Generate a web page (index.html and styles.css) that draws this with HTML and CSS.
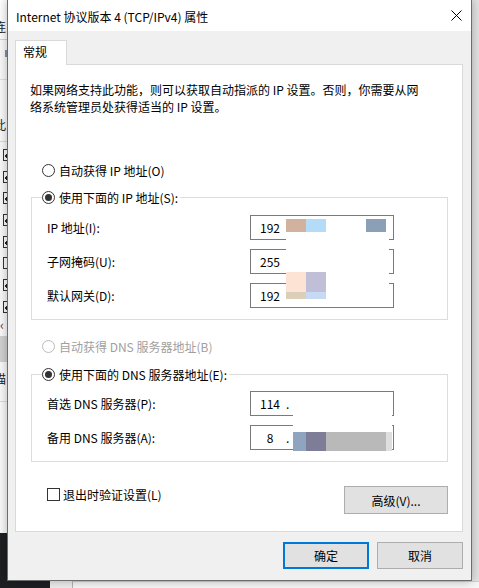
FILE: index.html
```html
<!DOCTYPE html>
<html lang="zh-CN">
<head>
<meta charset="utf-8">
<title>Internet 协议版本 4 (TCP/IPv4) 属性</title>
<link rel="stylesheet" href="styles.css">
</head>
<body>
<div class="desktop">

  <!-- edge of the network connection window behind the dialog -->
  <div class="peek">
    <div class="pk-head"><span class="pk-glyph">连</span></div>
    <div class="pk-bar"><span class="pk-tick"></span></div>
    <div class="pk-label"><span class="pk-glyph">此</span></div>
    <ul class="pk-list">
      <li><span class="pk-box on"></span></li>
      <li><span class="pk-box on"></span></li>
      <li><span class="pk-box on"></span></li>
      <li><span class="pk-box on"></span></li>
      <li><span class="pk-box on"></span></li>
      <li><span class="pk-box"></span></li>
      <li><span class="pk-box on"></span></li>
      <li><span class="pk-box on"></span></li>
    </ul>
    <div class="pk-arrow">‹</div>
    <div class="pk-band"></div>
    <div class="pk-desc"><span class="pk-glyph">描</span></div>
  </div>
  <div class="dark-win"></div>
  <div class="under-win"><div class="under-field"></div></div>

  <!-- IPv4 properties dialog -->
  <div class="dialog">
    <div class="titlebar">
      <span class="title">Internet 协议版本 4 (TCP/IPv4) 属性</span>
      <svg class="close" width="11" height="11" viewBox="0 0 11 11" aria-label="关闭">
        <path d="M0.5 0.5L10.5 10.5M10.5 0.5L0.5 10.5" stroke="#000" stroke-width="1" fill="none"/>
      </svg>
    </div>

    <div class="body">
      <div class="tab">常规</div>
      <div class="panel">
        <p class="desc">如果网络支持此功能，则可以获取自动指派的 IP 设置。否则，你需要从网<br>络系统管理员处获得适当的 IP 设置。</p>

        <label class="opt opt-first"><span class="radio"></span>自动获得 IP 地址(O)</label>

        <div class="group">
          <label class="opt legend"><span class="radio on"></span>使用下面的 IP 地址(S):</label>
          <div class="fields">
            <span>IP 地址(I):</span>
            <div class="ip"><span class="oct">192</span></div>
            <span>子网掩码(U):</span>
            <div class="ip"><span class="oct">255</span></div>
            <span>默认网关(D):</span>
            <div class="ip"><span class="oct">192</span></div>
          </div>
        </div>

        <label class="opt opt-dis"><span class="radio dis"></span>自动获得 DNS 服务器地址(B)</label>

        <div class="group group-dns">
          <label class="opt legend"><span class="radio on"></span>使用下面的 DNS 服务器地址(E):</label>
          <div class="fields fields-dns">
            <span>首选 DNS 服务器(P):</span>
            <div class="ip"><span class="oct">114</span><span class="dot">.</span></div>
            <span>备用 DNS 服务器(A):</span>
            <div class="ip"><span class="oct">8</span><span class="dot">.</span></div>
          </div>
        </div>

        <div class="foot">
          <label class="check"><span class="box"></span>退出时验证设置(L)</label>
          <button class="btn btn-adv">高级(V)...</button>
        </div>
      </div>

      <div class="actions">
        <button class="btn btn-ok">确定</button>
        <button class="btn">取消</button>
      </div>
    </div>

    <!-- pixelated cover over the hidden address octets -->
    <div class="mosaic mosaic-ip">
      <span class="c c-tan"></span>
      <span class="c c-sky"></span>
      <span class="c c-slate"></span>
      <span class="c c-peach"></span>
      <span class="c c-lilac"></span>
      <span class="c c-sand"></span>
      <span class="c c-ice"></span>
    </div>
    <div class="mosaic mosaic-dns">
      <span class="c d-steel"></span>
      <span class="c d-plum"></span>
      <span class="c d-grey"></span>
      <span class="c d-pale"></span>
    </div>
  </div>
</div>
</body>
</html>
```

FILE: styles.css
```css
* { box-sizing: border-box; }

html, body {
  margin: 0;
  padding: 0;
}

body {
  width: 479px;
  height: 588px;
  overflow: hidden;
  font-family: "Noto Sans CJK SC", "Microsoft YaHei", sans-serif;
  font-size: 12px;
  color: #000;
}

.desktop {
  position: relative;
  width: 479px;
  height: 588px;
  background: #e4e4e4;
  overflow: hidden;
}

/* ---------- window behind ---------- */
.peek {
  position: absolute;
  left: 0;
  top: 0;
  width: 7px;
  height: 533px;
  background: #fbfbfb;
  overflow: hidden;
}

.pk-head {
  height: 40px;
  border-bottom: 1px solid #d6d6d6;
  padding-top: 18px;
  background: #fff;
}

.pk-glyph {
  display: block;
  margin-left: -6px;
  line-height: 17px;
  white-space: nowrap;
  color: #222;
}

.pk-bar {
  height: 40px;
  padding: 10px 0 0 5px;
  border-bottom: 1px solid #e2e2e2;
}

.pk-tick {
  display: block;
  width: 2px;
  height: 7px;
  background: #8294ad;
}

.pk-label {
  height: 62px;
  padding-top: 36px;
  border-bottom: 1px solid #dadada;
}

.pk-list {
  list-style: none;
  margin: 0;
  padding: 2px 0 0;
}

.pk-list li {
  height: 21.7px;
  display: flex;
  align-items: center;
}

.pk-box {
  display: block;
  margin-left: 3px;
  width: 12px;
  height: 12px;
  border: 1px solid #333;
  background: #fff;
  flex: none;
}

.pk-box.on {
  background: radial-gradient(circle at 3px 6px, #222 1.6px, transparent 2px) #fff;
}

.pk-arrow {
  height: 14px;
  line-height: 14px;
  color: #444;
  font-size: 13px;
}

.pk-band {
  height: 26px;
  margin-top: 4px;
  background: #d3d3d3;
}

.pk-desc {
  height: 40px;
  padding-top: 8px;
  border-bottom: 1px solid #dedede;
}

.dark-win {
  position: absolute;
  left: 0;
  top: 533px;
  width: 50px;
  height: 55px;
  background: #1e1f22;
}

.under-win {
  position: absolute;
  left: 50px;
  top: 581px;
  width: 429px;
  height: 7px;
  background: #efefef;
  padding-left: 22px;
}

.under-field {
  height: 100%;
  border-left: 1px solid #b4b4b4;
  border-top: 1px solid #d0d0d0;
  background: #f7f7f7;
}

/* ---------- dialog ---------- */
.dialog {
  position: absolute;
  left: 7px;
  top: -1px;
  width: 465px;
  height: 582px;
  border: 1px solid #6d6d6d;
  background: #f0f0f0;
  box-shadow: 0 0 10px rgba(0, 0, 0, 0.3);
  display: flex;
  flex-direction: column;
}

.titlebar {
  height: 31px;
  flex: none;
  background: #fff;
  display: flex;
  align-items: center;
  padding: 0 9px 0 8px;
}

.title {
  flex: 1;
  line-height: 17px;
  padding-top: 1px;
}

.close {
  display: block;
  flex: none;
  margin-top: -1px;
}

.body {
  flex: 1;
  display: flex;
  flex-direction: column;
  padding: 9px 8px 11px 7px;
}

.tab {
  position: relative;
  z-index: 1;
  width: 52px;
  height: 25px;
  margin-bottom: -1px;
  border: 1px solid #d9d9d9;
  border-bottom: none;
  background: #fff;
  padding-left: 7px;
  line-height: 22px;
}

.panel {
  flex: none;
  height: 468px;
  border: 1px solid #d9d9d9;
  background: #fff;
  padding: 16px 14px 0 15px;
  display: flex;
  flex-direction: column;
}

.desc {
  margin: 0 0 0 -1px;
  line-height: 17px;
}

.opt {
  display: flex;
  align-items: center;
  gap: 4px;
  height: 18px;
  line-height: 17px;
  margin-left: 11px;
  width: max-content;
}

.opt-first { margin-top: 46px; }

.radio {
  flex: none;
  width: 13px;
  height: 13px;
  border: 1px solid #333;
  border-radius: 50%;
  background: #fff;
  display: flex;
  align-items: center;
  justify-content: center;
}

.radio.on::after {
  content: "";
  width: 7px;
  height: 7px;
  border-radius: 50%;
  background: #333;
}

.radio.dis { border-color: #bcbcbc; }

.opt-dis {
  margin-top: 17px;
  color: #a0a0a0;
}

.group {
  margin-top: 18px;
  border: 1px solid #dcdcdc;
  padding: 0 0 11px 15px;
}

.group-dns { margin-top: 19px; }

/* the radio sits on the group's top border, 10px in from its left edge */
.legend {
  margin: -10px 0 0 -5px;
  padding-right: 2px;
  background: #fff;
}

.fields {
  margin-top: 9px;
  display: grid;
  grid-template-columns: 203px 144px;
  grid-auto-rows: 25px;
  row-gap: 9px;
  align-items: center;
  line-height: 17px;
}

.fields-dns { margin-top: 8px; }

.ip {
  height: 25px;
  border: 1px solid #7a7a7a;
  background: #fff;
  display: flex;
  align-items: center;
  padding-left: 3px;
}

.oct {
  width: 32px;
  text-align: center;
}

.dot {
  width: 3px;
  text-align: center;
}

.foot {
  margin-top: 24px;
  display: flex;
  justify-content: space-between;
  align-items: flex-start;
}

.check {
  display: flex;
  align-items: center;
  gap: 3px;
  margin-left: 16px;
  line-height: 17px;
}

.box {
  flex: none;
  width: 13px;
  height: 13px;
  border: 1px solid #333;
  background: #fff;
}

.btn {
  width: 86px;
  height: 27px;
  padding: 0;
  margin: 0;
  border: 1px solid #adadad;
  background: #e1e1e1;
  font: inherit;
  color: #000;
}

.btn-adv {
  width: 104px;
  height: 28px;
}

.btn-ok { border: 2px solid #0078d7; }

.actions {
  margin-top: 10px;
  display: flex;
  justify-content: flex-end;
  gap: 8px;
}

/* ---------- pixelated cover ---------- */
.mosaic {
  position: absolute;
  display: grid;
  background: #fff;
}

.mosaic-ip {
  left: 278px;
  top: 219px;
  width: 103px;
  height: 81px;
  grid-template-columns: 20px 20px 40px 20px 3px;
  grid-template-rows: 13px 40px 20px 7px;
}

.c-tan   { grid-area: 1 / 1; background: #d2b19f; }
.c-sky   { grid-area: 1 / 2; background: #b4dbf7; }
.c-slate { grid-area: 1 / 4; background: #8b9fb6; }
.c-peach { grid-area: 3 / 1; background: #fde3d3; }
.c-lilac { grid-area: 3 / 2; background: #c1bed8; }
.c-sand  { grid-area: 4 / 1; background: #dbcfb9; }
.c-ice   { grid-area: 4 / 2; background: #c6dbf3; }

.mosaic-dns {
  left: 285px;
  top: 405px;
  width: 99px;
  height: 46px;
  grid-template-columns: 13px 20px 60px 6px;
  grid-template-rows: 27px 19px;
}

.d-steel { grid-area: 2 / 1; background: #8fa4be; }
.d-plum  { grid-area: 2 / 2; background: #7d7d97; }
.d-grey  { grid-area: 2 / 3; background: #b9b9b9; }
.d-pale  { grid-area: 2 / 4; background: #dedede; }
```
